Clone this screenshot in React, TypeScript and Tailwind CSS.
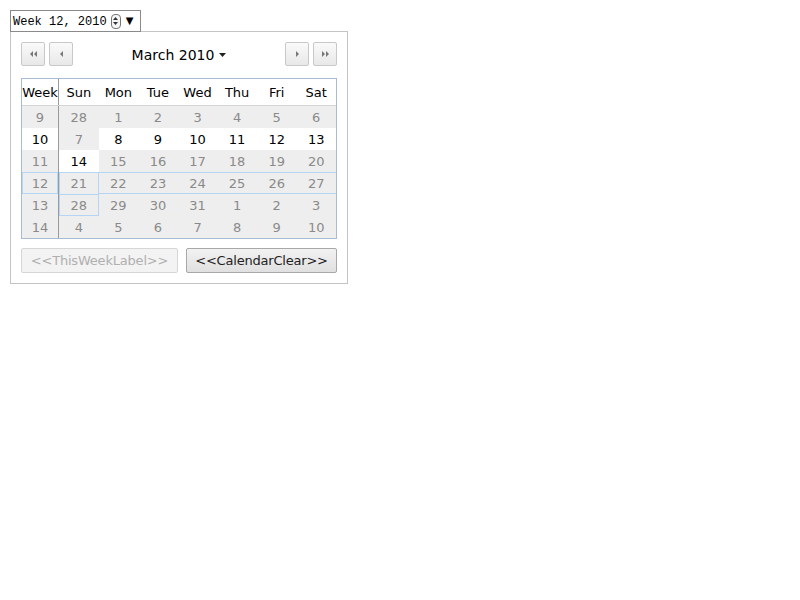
import React from 'react';

type Cell = { v: number; on?: boolean; ring?: string };
type Row = { w: Cell; days: Cell[] };

const rows: Row[] = [
  { w: { v: 9 }, days: [28, 1, 2, 3, 4, 5, 6].map((v) => ({ v })) },
  {
    w: { v: 10, on: true },
    days: [{ v: 7 }, ...[8, 9, 10, 11, 12, 13].map((v) => ({ v, on: true }))],
  },
  {
    w: { v: 11 },
    days: [{ v: 14, on: true }, ...[15, 16, 17, 18, 19, 20].map((v) => ({ v }))],
  },
  {
    w: { v: 12, ring: 'shadow-[inset_0_0_0_1px_#b5d5f5]' },
    days: [
      { v: 21, ring: 'shadow-[inset_1px_1px_0_0_#b5d5f5,inset_-1px_0_0_0_#b5d5f5]' },
      ...[22, 23, 24, 25, 26, 27].map((v) => ({
        v,
        ring: 'shadow-[inset_0_1px_0_0_#b5d5f5,inset_0_-1px_0_0_#b5d5f5]',
      })),
    ],
  },
  {
    w: { v: 13 },
    days: [
      { v: 28, ring: 'shadow-[inset_0_0_0_1px_#b5d5f5]' },
      ...[29, 30, 31, 1, 2, 3].map((v) => ({ v })),
    ],
  },
  { w: { v: 14 }, days: [4, 5, 6, 7, 8, 9, 10].map((v) => ({ v })) },
];

const dayNames = ['Sun', 'Mon', 'Tue', 'Wed', 'Thu', 'Fri', 'Sat'];

const NavIcon = ({ dir, double }: { dir: 'l' | 'r'; double?: boolean }) => {
  const tri = (x: number) =>
    dir === 'l' ? `M${x + 3} 0 L${x} 3 L${x + 3} 6 Z` : `M${x} 0 L${x + 3} 3 L${x} 6 Z`;
  return (
    <svg width={double ? 7 : 3} height="6" viewBox={double ? '0 0 7 6' : '0 0 3 6'}>
      <path d={tri(0)} fill="#777" />
      {double && <path d={tri(4)} fill="#777" />}
    </svg>
  );
};

const NavButton = ({ dir, double }: { dir: 'l' | 'r'; double?: boolean }) => (
  <button className="w-[24px] h-[24px] flex items-center justify-center border border-[#c8c8c8] rounded-[2px] bg-gradient-to-b from-[#fafafa] to-[#e8e8e8]">
    <NavIcon dir={dir} double={double} />
  </button>
);

const App: React.FC = () => {
  return (
    <div className="w-[800px] h-[600px] bg-white p-[10px] font-['DejaVu_Sans',sans-serif]">
      {/* input field */}
      <div className="w-[131px] h-[22px] border border-[#8a8a8a] flex items-center pl-[2px] bg-white relative z-10">
        <span className="font-['Liberation_Mono',monospace] text-[12px] text-black leading-none pt-[1px]">
          Week 12, 2010
        </span>
        <span className="ml-[4px] w-[10px] h-[15px] border border-[#777] rounded-[4px] flex flex-col items-center justify-center gap-[2px] bg-[#f6f6f6]">
          <svg width="5" height="3" viewBox="0 0 5 3"><path d="M0 3 L2.5 0 L5 3 Z" fill="#333" /></svg>
          <svg width="5" height="3" viewBox="0 0 5 3"><path d="M0 0 L2.5 3 L5 0 Z" fill="#333" /></svg>
        </span>
        <span className="ml-[5px] text-[10px] leading-none text-black">▼</span>
      </div>

      {/* popup */}
      <div className="w-[338px] -mt-px border border-[#c4c4c4] px-[10px] pt-[10px] pb-[10px]">
        <div className="flex items-center">
          <div className="flex gap-[4px]">
            <NavButton dir="l" double />
            <NavButton dir="l" />
          </div>
          <div className="flex-1 flex items-center justify-center gap-[5px] text-[14px] text-black pt-[2px]">
            <span>March 2010</span>
            <svg width="7" height="4" viewBox="0 0 7 4"><path d="M0 0 L7 0 L3.5 4 Z" fill="#222" /></svg>
          </div>
          <div className="flex gap-[4px]">
            <NavButton dir="r" />
            <NavButton dir="r" double />
          </div>
        </div>

        <div className="mt-[12px] w-[316px] border border-[#a9bbd3] text-[13px]">
          <div className="flex h-[27px] bg-white border-b border-[#d4d4d4] text-black">
            <div className="w-[37px] border-r border-[#9a9a9a] flex items-center justify-center pt-[2px]">Week</div>
            {dayNames.map((d) => (
              <div key={d} className="flex-1 flex items-center justify-center pt-[2px]">
                {d}
              </div>
            ))}
          </div>
          {rows.map((r, i) => (
            <div key={i} className="flex h-[22px]">
              <div
                className={`w-[37px] border-r border-[#9a9a9a] flex items-center justify-center pt-[2px] ${
                  r.w.on ? 'bg-white text-black' : 'bg-[#eeeeee] text-[#8a8a8a]'
                } ${r.w.ring ?? ''}`}
              >
                {r.w.v}
              </div>
              {r.days.map((c, j) => (
                <div
                  key={j}
                  className={`flex-1 flex items-center justify-center pt-[2px] ${
                    c.on ? 'bg-white text-black' : 'bg-[#eeeeee] text-[#8a8a8a]'
                  } ${c.ring ?? ''}`}
                >
                  {c.v}
                </div>
              ))}
            </div>
          ))}
        </div>

        <div className="mt-[9px] flex gap-[8px] text-[13px]">
          <button className="w-[157px] h-[25px] border border-[#d6d6d6] rounded-[2px] bg-[#f3f3f3] text-[#b0b0b0] tracking-[-0.2px]">
            &lt;&lt;ThisWeekLabel&gt;&gt;
          </button>
          <button className="w-[151px] h-[25px] border border-[#a8a8a8] rounded-[2px] bg-gradient-to-b from-[#f2f2f2] to-[#e0e0e0] text-[#222] tracking-[-0.2px]">
            &lt;&lt;CalendarClear&gt;&gt;
          </button>
        </div>
      </div>
    </div>
  );
};

export default App;
